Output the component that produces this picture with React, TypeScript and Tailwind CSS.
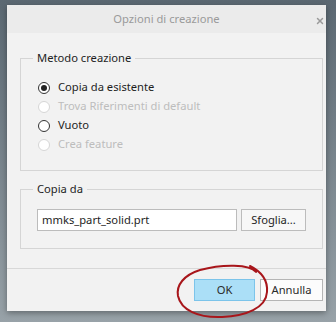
import { X } from 'lucide-react';

// piccolo radio in stile Windows
const Radio = ({ label, checked, disabled }: { label: string; checked?: boolean; disabled?: boolean }) => (
  <div className="flex items-center h-[19px]">
    <span
      className={`w-[12px] h-[12px] rounded-full border flex items-center justify-center bg-white ${
        disabled ? 'border-[#d6d6d6] bg-[#f3f3f3]' : 'border-[#333333]'
      }`}
    >
      {checked && <span className="w-[6px] h-[6px] rounded-full bg-[#222222]" />}
    </span>
    <span className={`ml-[8px] text-[11.2px] ${disabled ? 'text-[#bdbdbd]' : 'text-[#1e1e1e]'}`}>{label}</span>
  </div>
);

export default function App() {
  return (
    <div
      className="relative w-[336px] h-[322px] overflow-hidden bg-gradient-to-b from-[#5b6872] to-[#98a2a8] pt-[5px] pl-[7px]"
      style={{ fontFamily: '"Noto Sans", "Open Sans", sans-serif' }}
    >
      <div className="w-[319px] h-[306px] bg-[#f2f2f2] shadow-[0_2px_6px_rgba(0,0,0,0.35)] flex flex-col">
        {/* barra del titolo */}
        <div className="relative h-[28px] bg-[#ebebeb] flex items-center justify-center">
          <span className="text-[11.2px] text-[#9a9a9a]">Opzioni di creazione</span>
          <X className="absolute right-[1px] top-[11px] w-[10px] h-[10px] text-[#9a9a9a]" strokeWidth={3.5} />
        </div>

        <div className="flex-1 flex flex-col pl-[13px] pr-[3px] pt-[16px]">
          <fieldset className="border border-[#d5d5d5] pb-[16px]">
            <legend className="ml-[12px] px-[4px] text-[11.2px] leading-[18px] text-[#1e1e1e]">Metodo creazione</legend>
            <div className="pt-[11px] pl-[17px] flex flex-col">
              <Radio label="Copia da esistente" checked />
              <Radio label="Trova Riferimenti di default" disabled />
              <Radio label="Vuoto" />
              <Radio label="Crea feature" disabled />
            </div>
          </fieldset>

          <fieldset className="mt-[9px] border border-[#d5d5d5] pb-[17px]">
            <legend className="ml-[12px] px-[4px] text-[11.2px] leading-[18px] text-[#1e1e1e]">Copia da</legend>
            <div className="mt-[11px] px-[16px] flex items-center gap-[4px]">
              <div className="w-[200px] h-[22px] bg-white border border-[#bcbcbc] flex items-center px-[4px] text-[11.2px] text-[#1e1e1e]">
                mmks_part_solid.prt
              </div>
              <button className="flex-1 h-[22px] bg-[#f7f7f7] border border-[#bcbcbc] text-[11.2px] text-[#1e1e1e]">
                Sfoglia...
              </button>
            </div>
          </fieldset>
        </div>

        <div className="h-[43px] border-t border-[#d8d8d8] flex items-start justify-end gap-[5px] pr-[3px] pt-[10px]">
          <button className="w-[61px] h-[22px] bg-[#abdff7] border border-[#7cc4ea] text-[11.2px] text-[#2a2a2a]">
            OK
          </button>
          <button className="w-[63px] h-[22px] bg-[#fcfcfc] border border-[#b5b5b5] text-[11.2px] text-[#2a2a2a]">
            Annulla
          </button>
        </div>
      </div>

      {/* cerchio rosso disegnato a mano */}
      <svg className="absolute left-0 top-0 pointer-events-none" width="336" height="322" viewBox="0 0 336 322">
        <path
          d="M 256 272 C 250 264, 222 264, 200 270 C 184 275, 176 285, 178 296 C 181 310, 198 318, 222 317 C 246 316, 266 308, 267 292 C 268 280, 262 272, 250 266"
          fill="none"
          stroke="#a8161b"
          strokeWidth="2"
          strokeLinecap="round"
        />
      </svg>
    </div>
  );
}
